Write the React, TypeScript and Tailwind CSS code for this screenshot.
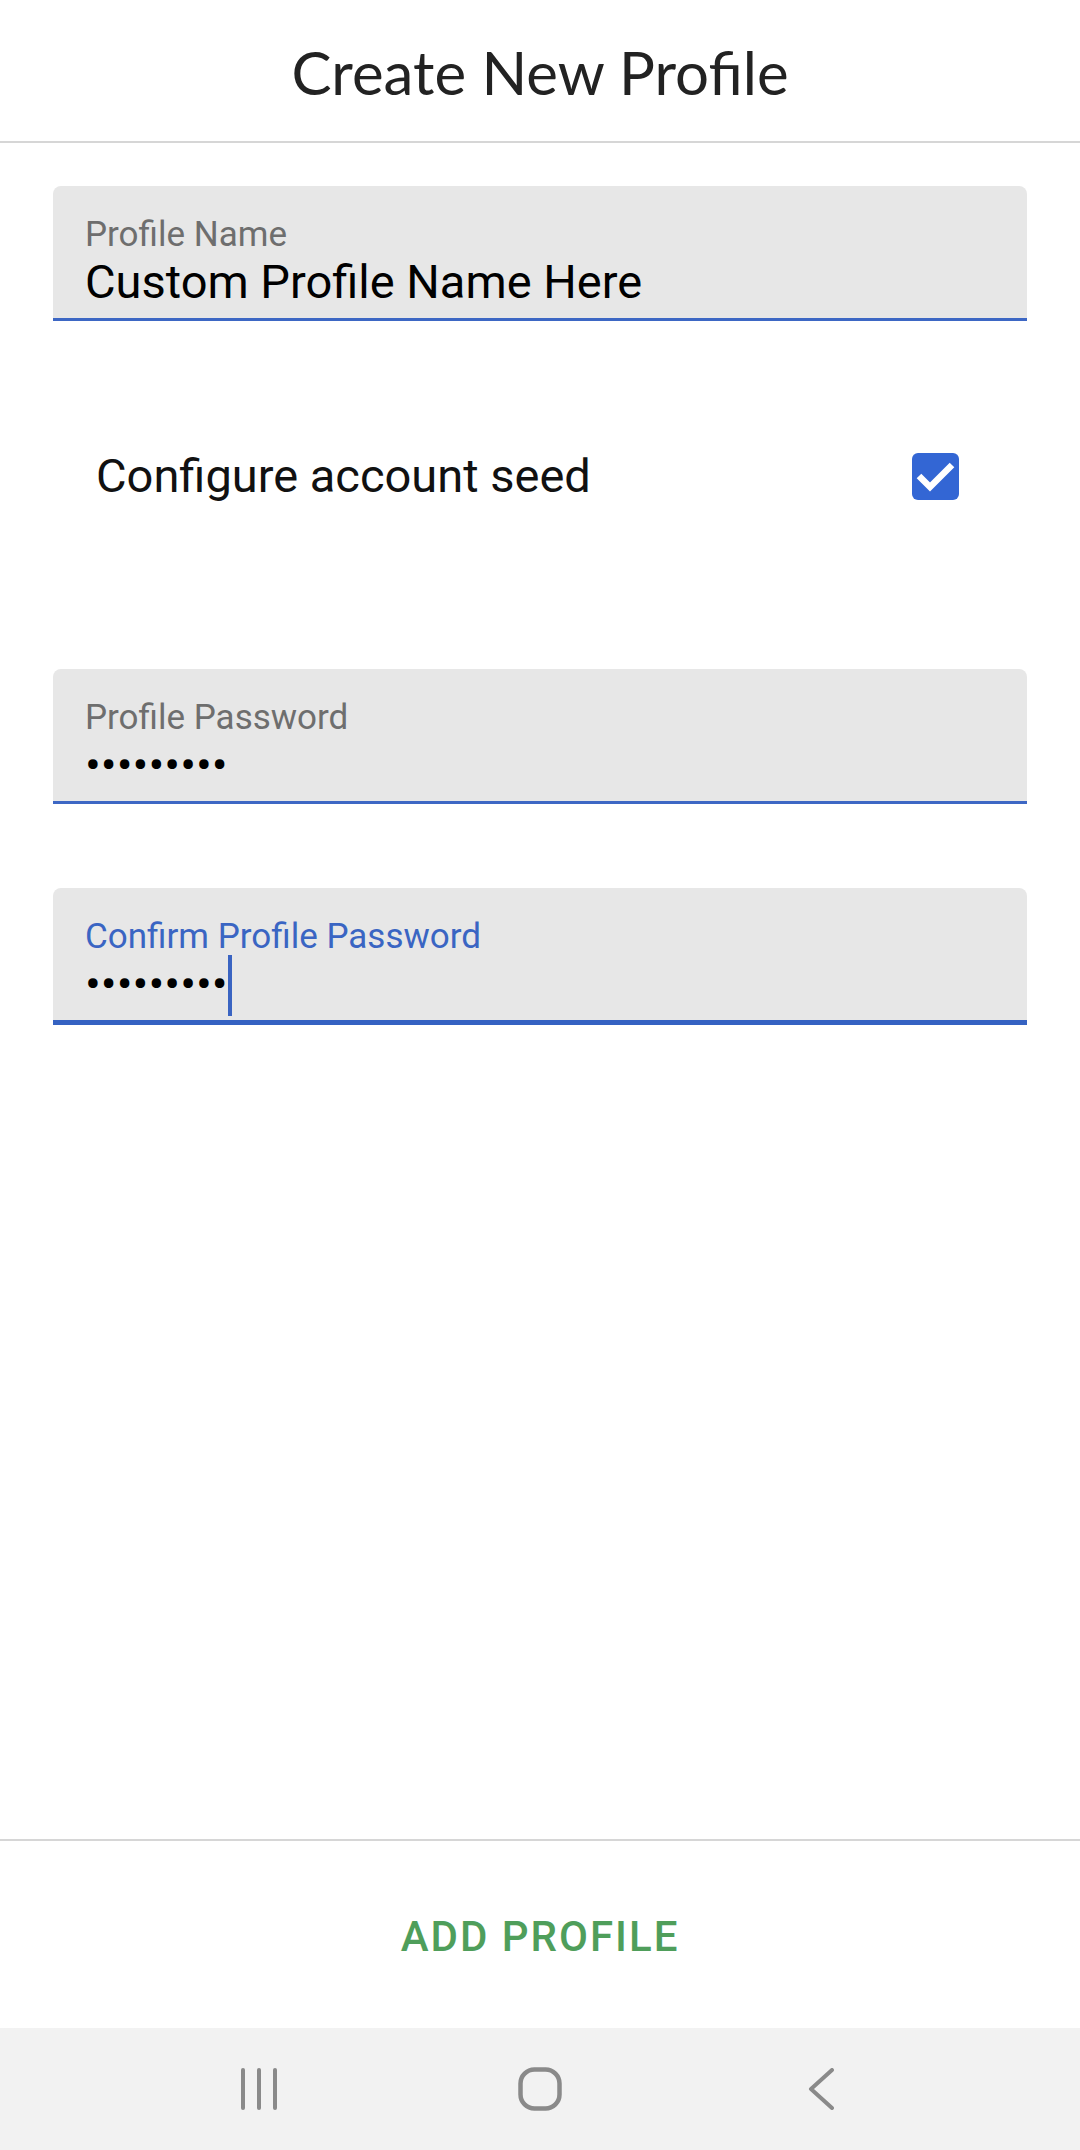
import React from "react";

function Field({
  label,
  value,
  focused,
}: {
  label: string;
  value: string;
  focused?: boolean;
}) {
  return (
    <div
      className={
        "rounded-t-[8px] bg-[#e7e7e7] px-[32px] pt-[29px] " +
        (focused ? "border-b-[5px] border-[#3562c2] h-[137px]" : "border-b-[3px] border-[#3d67c4] h-[135px]")
      }
    >
      <div
        className={
          "text-[35px] leading-[39px] " + (focused ? "text-[#3a65c3]" : "text-[#6e6e6e]")
        }
      >
        {label}
      </div>
      <div className="flex items-center h-[52px] mt-[2px]">
        <span className="text-[47px] leading-[52px] text-black">{value}</span>
        {focused && <span className="ml-0 mt-[2px] h-[61px] w-[4px] bg-[#3a64c2]" />}
      </div>
    </div>
  );
}

export default function App() {
  return (
    <div className="w-[1080px] h-[2150px] flex flex-col bg-white font-[Roboto,sans-serif]">
      <header className="h-[143px] shrink-0 flex items-center justify-center border-b-2 border-[#d6d6d6]">
        <h1 className="font-[Lato,sans-serif] text-[60px] leading-none text-[#222222] mt-[2px]">
          Create New Profile
        </h1>
      </header>

      <main className="flex-1 px-[53px] pt-[43px]">
        <Field label="Profile Name" value="Custom Profile Name Here" />

        <div className="mt-[95px] mb-[133px] h-[120px] flex items-center justify-between pl-[43px] pr-[68px]">
          <span className="text-[47px] leading-[52px] text-[#111111]">Configure account seed</span>
          <span className="w-[47px] h-[47px] rounded-[6px] bg-[#3366d4] flex items-center justify-center">
            <svg width="47" height="47" viewBox="0 0 47 47">
              <polyline
                points="7,23 18,34 40,12"
                fill="none"
                stroke="#ffffff"
                strokeWidth="6.5"
                strokeLinejoin="miter"
              />
            </svg>
          </span>
        </div>

        <Field label="Profile Password" value="•••••••••" />
        <div className="h-[84px]" />
        <Field label="Confirm Profile Password" value="•••••••••" focused />
      </main>

      <footer className="h-[189px] shrink-0 border-t-2 border-[#d6d6d6] flex items-center justify-center">
        <button className="text-[42px] leading-none font-medium tracking-[2px] text-[#4f9e5b] mt-[4px]">
          ADD PROFILE
        </button>
      </footer>

      <nav className="h-[122px] shrink-0 bg-[#f2f2f2] flex items-center justify-center">
        <div className="w-[281px] flex justify-center">
          <svg width="40" height="42" viewBox="0 0 40 42">
            <line x1="4" y1="2" x2="4" y2="40" stroke="#8a8a8a" strokeWidth="4" strokeLinecap="round" />
            <line x1="20" y1="2" x2="20" y2="40" stroke="#8a8a8a" strokeWidth="4" strokeLinecap="round" />
            <line x1="36" y1="2" x2="36" y2="40" stroke="#8a8a8a" strokeWidth="4" strokeLinecap="round" />
          </svg>
        </div>
        <div className="w-[281px] flex justify-center">
          <svg width="44" height="44" viewBox="0 0 44 44">
            <rect x="2.5" y="2.5" width="39" height="39" rx="14" fill="none" stroke="#8a8a8a" strokeWidth="4.5" />
          </svg>
        </div>
        <div className="w-[281px] flex justify-center">
          <svg width="26" height="42" viewBox="0 0 26 42">
            <polyline
              points="24,2 3,21 24,40"
              fill="none"
              stroke="#8a8a8a"
              strokeWidth="4"
              strokeLinecap="round"
              strokeLinejoin="round"
            />
          </svg>
        </div>
      </nav>
    </div>
  );
}
